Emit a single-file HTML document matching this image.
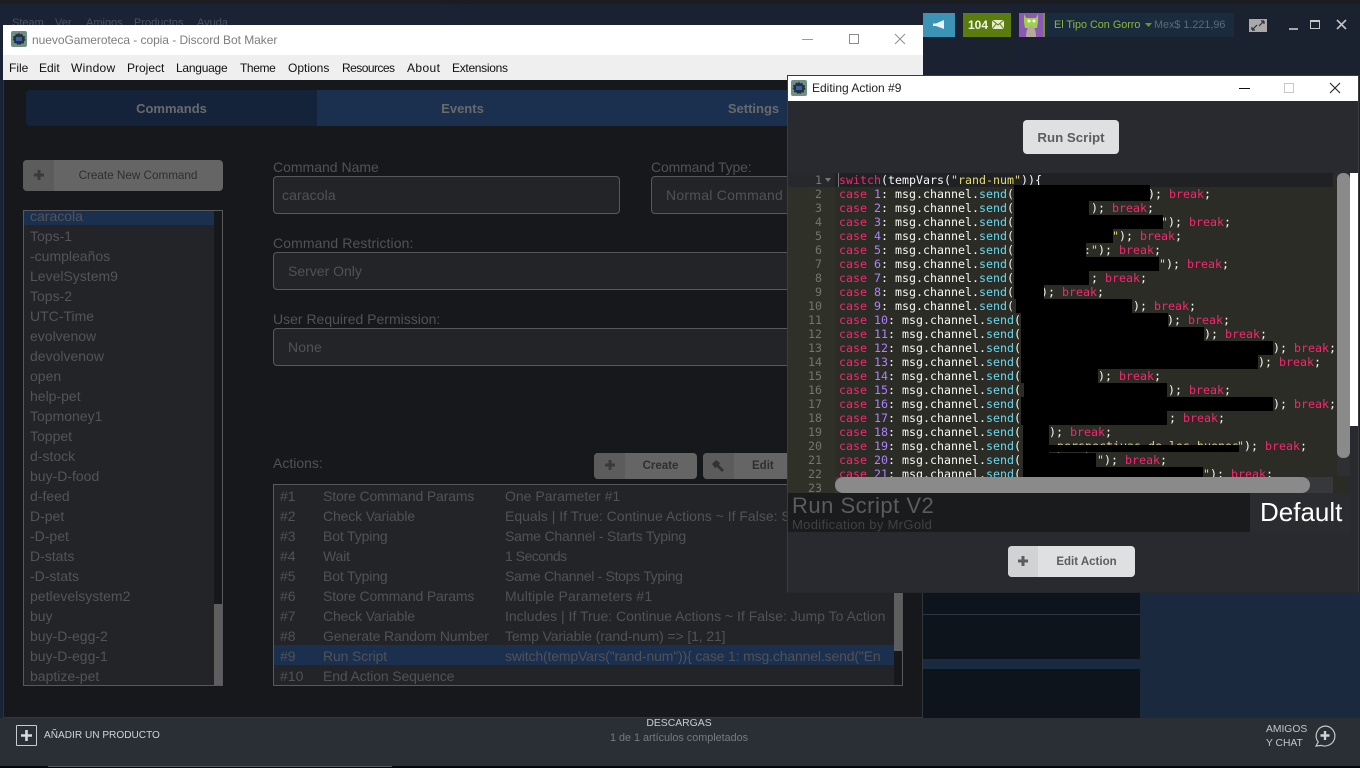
<!DOCTYPE html>
<html><head><meta charset="utf-8"><title>Discord Bot Maker</title>
<style>
html,body{margin:0;padding:0;width:1360px;height:768px;overflow:hidden;background:#1a2130}
*{box-sizing:border-box}
body{position:relative;font-family:"Liberation Sans",sans-serif}
.a{position:absolute}
.t{position:absolute;white-space:nowrap}
.lb{position:absolute;white-space:nowrap;font-size:14px;color:#505256;line-height:16px}
.inp{position:absolute;background:#222428;border:1px solid #58595c;border-radius:4px;height:38px;font-size:14px;color:#505256;line-height:36px;white-space:nowrap}
.it{position:absolute;left:6px;font-size:14px;line-height:20px;color:#525458;white-space:nowrap}
.row{position:absolute;left:0;width:620px;height:20px;line-height:20px;font-size:14px;color:#505256;white-space:nowrap}
.row span{position:absolute;top:0}
.row span:nth-child(1){left:6px}
.row span:nth-child(2){left:49px;letter-spacing:-.14px}
.row span:nth-child(3){left:231px}
.btn{position:absolute;background:#656565;border-radius:4px;overflow:hidden;font-size:12px;font-weight:bold;color:#333;text-align:center}
.btn i{position:absolute;left:0;top:0;bottom:0;background:#5c5c5c}
.m{position:absolute;top:60px;font-size:12px;line-height:16px;color:#111;white-space:nowrap}
#code{position:absolute;left:839px;top:173px;width:498px;height:304px;overflow:hidden;font:11.63px/14px "DejaVu Sans Mono","Liberation Mono",monospace;color:#f8f8f2}
#code div{position:relative;height:14px;white-space:pre}
#code b{font-weight:normal;color:#f92672}
#code i{font-style:normal;color:#ae81ff}
#code u{text-decoration:none;color:#66d9ef}
#code q{quotes:none;color:#e6db74}
#code s{position:absolute;top:0;text-decoration:none}
#code em{position:absolute;top:0;height:14px;background:#000}
#num{position:absolute;left:788px;top:173px;width:34px;font:11.63px/14px "DejaVu Sans Mono","Liberation Mono",monospace;color:#74756d;text-align:right}
</style></head><body>

<!-- steam background -->
<div class="a" style="left:0;top:0;width:1360px;height:4px;background:#1c1d21"></div>
<div class="a" style="left:0;top:4px;width:1360px;height:714px;background:linear-gradient(90deg,#1a2336,#1a2130 60%,#1a2230)"></div>
<div class="t" style="left:12px;top:16px;font-size:11px;line-height:14px;color:#49535f">Steam</div>
<div class="t" style="left:55px;top:16px;font-size:11px;line-height:14px;color:#49535f">Ver</div>
<div class="t" style="left:86px;top:16px;font-size:11px;line-height:14px;color:#49535f">Amigos</div>
<div class="t" style="left:134px;top:16px;font-size:11px;line-height:14px;color:#49535f">Productos</div>
<div class="t" style="left:197px;top:16px;font-size:11px;line-height:14px;color:#49535f">Ayuda</div>

<div class="a" style="left:923px;top:13px;width:32px;height:24px;background:#3c93b6"></div>
<svg class="a" style="left:932px;top:19px" width="14" height="12" viewBox="0 0 14 12"><path d="M1 4.5h3L12 1v9L4 7H1z" fill="#e8f2f6"/></svg>
<div class="a" style="left:963px;top:13px;width:48px;height:24px;background:#5b7d0f"></div>
<div class="t" style="left:968px;top:18px;font-size:12px;line-height:14px;font-weight:bold;color:#f0f4e4">104</div>
<svg class="a" style="left:992px;top:20px" width="12" height="10" viewBox="0 0 12 10"><rect width="12" height="9" fill="#e4ebcf"/><path d="M0 0l6 5 6-5M0 9l4-5M12 9L8 4" stroke="#5b7d0f" fill="none"/></svg>
<div class="a" style="left:1019px;top:13px;width:26px;height:24px;background:#1a2b3f"></div>
<svg class="a" style="left:1019px;top:13px" width="26" height="24" viewBox="0 0 26 24"><rect width="24" height="24" fill="#8d57b5"/><rect x="24" width="2" height="24" fill="#6e9a2c"/><path d="M5 1l2 4h10l2-4v8l-1 6H6L5 9z" fill="#9fd14a"/><circle cx="10" cy="8" r="1.5" fill="#fff"/><circle cx="15" cy="8" r="1.5" fill="#fff"/><path d="M7 24c0-7 2-11 5-11s5 4 5 11z" fill="#b5aa9c"/></svg>
<div class="a" style="left:1045px;top:13px;width:189px;height:24px;background:#1a2b3e"></div>
<div class="t" style="left:1054px;top:18px;font-size:10.8px;line-height:14px;color:#8fb53c">El Tipo Con Gorro</div>
<svg class="a" style="left:1145px;top:23px" width="8" height="5"><path d="M0 0h7L3.5 4z" fill="#6f9033"/></svg>
<div class="t" style="left:1154px;top:18px;font-size:10.8px;line-height:14px;color:#5b6a7c">Mex$ 1.221,96</div>
<svg class="a" style="left:1249px;top:19px" width="18" height="13" viewBox="0 0 18 13"><rect width="18" height="13" fill="#a9a9ab"/><path d="M3 11l5-5M3 11h3M3 11V8M15 2l-5 5M15 2h-3M15 2v3" stroke="#2a2f3a" stroke-width="1.2" fill="none"/></svg>
<div class="a" style="left:1289px;top:28px;width:9px;height:2px;background:#a8a8a8"></div>
<div class="a" style="left:1310px;top:20px;width:10px;height:9px;border:1.5px solid #c4c6c8;border-top-width:2.5px"></div>
<svg class="a" style="left:1336px;top:19px" width="11" height="11"><path d="M1 1l9 9M10 1l-9 9" stroke="#c0c2c4" stroke-width="1.6"/></svg>

<!-- library lower right -->
<div class="a" style="left:923px;top:592px;width:217px;height:126px;background:#0d141c"></div>
<div class="a" style="left:1140px;top:592px;width:220px;height:126px;background:#1a293d"></div>
<div class="a" style="left:923px;top:614px;width:217px;height:1px;background:#2a3646"></div>
<div class="a" style="left:923px;top:659px;width:217px;height:10px;background:#1a2a40"></div>

<!-- bottom bar -->
<div class="a" style="left:0;top:718px;width:1360px;height:48px;background:#2a2e35"></div>
<div class="a" style="left:0;top:766px;width:1360px;height:2px;background:#060708"></div>
<div class="a" style="left:48px;top:766px;width:344px;height:1px;background:#55585c"></div>
<div class="a" style="left:16px;top:725px;width:21px;height:21px;border:1px solid #c8cacc;border-radius:1px"></div>
<svg class="a" style="left:21px;top:730px" width="11" height="11"><path d="M5.5 0v11M0 5.5h11" stroke="#d8dadc" stroke-width="2.6"/></svg>
<div class="t" style="left:44px;top:729px;font-size:10.1px;line-height:14px;color:#d2d4d6">AÑADIR UN PRODUCTO</div>
<div class="t" style="left:579px;width:200px;text-align:center;top:717px;font-size:10.4px;line-height:14px;color:#c9cbcd">DESCARGAS</div>
<div class="t" style="left:579px;width:200px;text-align:center;top:731px;font-size:10.8px;line-height:14px;color:#777b80">1 de 1 artículos completados</div>
<div class="t" style="left:1266px;top:723px;font-size:10.3px;line-height:14px;color:#c4c6c8">AMIGOS</div>
<div class="t" style="left:1266px;top:737px;font-size:10.3px;line-height:14px;color:#c4c6c8">Y CHAT</div>
<svg class="a" style="left:1313px;top:724px" width="24" height="24" viewBox="0 0 24 24"><path d="M12 2a10 10 0 1 1-3.5 19.4L3 22l2.2-4A10 10 0 0 1 12 2z" fill="none" stroke="#c4c6c8" stroke-width="1.2"/><path d="M12 7v9M7.5 11.5h9" stroke="#d0d2d4" stroke-width="2.4"/></svg>

<!-- main window -->
<div class="a" style="left:3px;top:25px;width:920px;height:693px;background:#16181b;border-right:1px solid #33363a;border-bottom:1px solid #33363a;border-left:1px solid #22324a"></div>
<div class="a" style="left:3px;top:25px;width:920px;height:30px;background:#fff"></div>
<div class="a" style="left:3px;top:55px;width:920px;height:25px;background:#efefef"></div>
<svg class="a" style="left:11px;top:31px" width="16" height="16" viewBox="0 0 16 16"><rect width="16" height="16" rx="2" fill="#6d9186"/><path d="M8 1.5l1.2 2 2.2-.8.5 2.3 2.3.5-.8 2.2 1.4 1.3-2 1.2.3 2.3-2.4-.1L9.200 14 8 13l-1.500 1-1.100-1.800-2.400.100.300-2.300-1.800-1.200 1.200-1.300-.700-2.200 2.300-.500.500-2.300 2.200.800z" fill="#2b3036"/><rect x="5" y="6" width="6" height="4" fill="#2f62b5"/></svg>
<div class="t" style="left:32px;top:32px;font-size:12px;line-height:16px;letter-spacing:-.05px;color:#7d7d7d">nuevoGameroteca - copia - Discord Bot Maker</div>
<div class="a" style="left:802px;top:39px;width:11px;height:1px;background:#9a9a9a"></div>
<div class="a" style="left:849px;top:34px;width:10px;height:10px;border:1px solid #8c8c8c"></div>
<svg class="a" style="left:894px;top:33px" width="12" height="12"><path d="M1 1l10 10M11 1L1 11" stroke="#909090" stroke-width="1"/></svg>
<div class="m" style="left:9px">File</div>
<div class="m" style="left:39px">Edit</div>
<div class="m" style="left:71px;letter-spacing:.3px">Window</div>
<div class="m" style="left:127px">Project</div>
<div class="m" style="left:176px;letter-spacing:-.25px">Language</div>
<div class="m" style="left:240px;letter-spacing:-.4px">Theme</div>
<div class="m" style="left:288px">Options</div>
<div class="m" style="left:342px;letter-spacing:-.55px">Resources</div>
<div class="m" style="left:407px;letter-spacing:.4px">About</div>
<div class="m" style="left:452px;letter-spacing:-.3px">Extensions</div>

<!-- tabs -->
<div class="a" style="left:26px;top:90px;width:291px;height:36px;background:#15233a;border-radius:4px 0 0 4px"></div>
<div class="a" style="left:317px;top:90px;width:582px;height:36px;background:#1b304e"></div>
<div class="t" style="left:26px;width:291px;text-align:center;top:101px;font-size:13px;line-height:16px;font-weight:bold;color:#686a6c">Commands</div>
<div class="t" style="left:317px;width:291px;text-align:center;top:101px;font-size:13px;line-height:16px;font-weight:bold;color:#686a6c">Events</div>
<div class="t" style="left:608px;width:291px;text-align:center;top:101px;font-size:13px;line-height:16px;font-weight:bold;color:#686a6c">Settings</div>

<!-- create cmd -->
<div class="btn" style="left:23px;top:160px;width:200px;height:31px;line-height:30px"><i style="width:31px"></i><span style="position:relative;left:15px;font-weight:normal;font-size:11.7px;color:#2f2f2f">Create New Command</span></div>
<svg class="a" style="left:34px;top:170px" width="10" height="10"><path d="M5 0v10M0 5h10" stroke="#3a3a3a" stroke-width="3"/></svg>

<!-- command list -->
<div class="a" style="left:23px;top:210px;width:200px;height:476px;background:#222428;border:1px solid #58595c;overflow:hidden">
<div class="a" style="left:0;top:0;width:190px;height:14px;background:#1b304e"></div>
<div class="a" style="left:190px;top:0;width:8px;height:474px;background:#16181b"></div>
<div class="a" style="left:190px;top:393px;width:8px;height:81px;background:#5e5e5e"></div>
<div class="it" style="top:-5px">caracola</div>
<div class="it" style="top:15px">Tops-1</div>
<div class="it" style="top:35px">-cumpleaños</div>
<div class="it" style="top:55px">LevelSystem9</div>
<div class="it" style="top:75px">Tops-2</div>
<div class="it" style="top:95px">UTC-Time</div>
<div class="it" style="top:115px">evolvenow</div>
<div class="it" style="top:135px">devolvenow</div>
<div class="it" style="top:155px">open</div>
<div class="it" style="top:175px">help-pet</div>
<div class="it" style="top:195px">Topmoney1</div>
<div class="it" style="top:215px">Toppet</div>
<div class="it" style="top:235px">d-stock</div>
<div class="it" style="top:255px">buy-D-food</div>
<div class="it" style="top:275px">d-feed</div>
<div class="it" style="top:295px">D-pet</div>
<div class="it" style="top:315px">-D-pet</div>
<div class="it" style="top:335px">D-stats</div>
<div class="it" style="top:355px">-D-stats</div>
<div class="it" style="top:375px">petlevelsystem2</div>
<div class="it" style="top:395px">buy</div>
<div class="it" style="top:415px">buy-D-egg-2</div>
<div class="it" style="top:435px">buy-D-egg-1</div>
<div class="it" style="top:455px">baptize-pet</div>
</div>

<!-- form -->
<div class="lb" style="left:273px;top:159px">Command Name</div>
<div class="inp" style="left:273px;top:176px;width:347px;padding-left:8px;letter-spacing:.1px">caracola</div>
<div class="lb" style="left:651px;top:159px;letter-spacing:-.15px">Command Type:</div>
<div class="inp" style="left:651px;top:176px;width:200px;padding-left:14px;letter-spacing:.25px">Normal Command</div>
<div class="lb" style="left:273px;top:235px;letter-spacing:.1px">Command Restriction:</div>
<div class="inp" style="left:273px;top:252px;width:600px;padding-left:14px">Server Only</div>
<div class="lb" style="left:273px;top:311px">User Required Permission:</div>
<div class="inp" style="left:273px;top:328px;width:600px;padding-left:14px;letter-spacing:.1px">None</div>
<div class="lb" style="left:273px;top:455px">Actions:</div>

<div class="btn" style="left:594px;top:453px;width:103px;height:26px;line-height:26px;font-size:11.5px;color:#2f2f2f"><i style="width:31px"></i><span style="position:relative;left:15px">Create</span></div>
<svg class="a" style="left:605px;top:460px" width="10" height="10"><path d="M5 0v10M0 5h10" stroke="#3a3a3a" stroke-width="3"/></svg>
<div class="btn" style="left:703px;top:453px;width:100px;height:26px;line-height:26px;font-size:11.5px;color:#2f2f2f;text-align:left"><i style="width:31px"></i><span style="position:absolute;left:49px">Edit</span></div>
<svg class="a" style="left:712px;top:460px" width="13" height="12" viewBox="0 0 13 12"><path d="M0 4l4-4 4 3-1 2 5 5-2 2-5-5-2 1z" fill="#333"/></svg>

<!-- actions list -->
<div class="a" style="left:273px;top:484px;width:630px;height:202px;background:#222428;border:1px solid #58595c;overflow:hidden">
<div class="a" style="left:0;top:160px;width:620px;height:20px;background:#1b304e"></div>
<div class="a" style="left:620px;top:0;width:8px;height:200px;background:#16181b"></div>
<div class="a" style="left:620px;top:0;width:8px;height:166px;background:#5e5e5e"></div>
<div class="row" style="top:1px"><span>#1</span><span>Store Command Params</span><span>One Parameter #1</span></div>
<div class="row" style="top:21px"><span>#2</span><span>Check Variable</span><span>Equals | If True: Continue Actions ~ If False: Stop</span></div>
<div class="row" style="top:41px"><span>#3</span><span>Bot Typing</span><span style="letter-spacing:-.2px">Same Channel - Starts Typing</span></div>
<div class="row" style="top:61px"><span>#4</span><span>Wait</span><span style="letter-spacing:-.5px">1 Seconds</span></div>
<div class="row" style="top:81px"><span>#5</span><span>Bot Typing</span><span style="letter-spacing:-.3px">Same Channel - Stops Typing</span></div>
<div class="row" style="top:101px"><span>#6</span><span>Store Command Params</span><span style="letter-spacing:.15px">Multiple Parameters #1</span></div>
<div class="row" style="top:121px"><span>#7</span><span>Check Variable</span><span>Includes | If True: Continue Actions ~ If False: Jump To Action</span></div>
<div class="row" style="top:141px"><span>#8</span><span>Generate Random Number</span><span style="letter-spacing:-.12px">Temp Variable (rand-num) =&gt; [1, 21]</span></div>
<div class="row" style="top:161px"><span>#9</span><span>Run Script</span><span style="letter-spacing:-.15px">switch(tempVars("rand-num")){ case 1: msg.channel.send("En</span></div>
<div class="row" style="top:181px"><span>#10</span><span>End Action Sequence</span><span></span></div>
</div>

<!-- edit window -->
<div class="a" style="left:787px;top:75px;width:572px;height:518px;background:#282a2f;border:1px solid #3a3c40;border-bottom-color:#25272b"></div>
<div class="a" style="left:788px;top:76px;width:570px;height:25px;background:#fff"></div>
<svg class="a" style="left:791px;top:80px" width="16" height="16" viewBox="0 0 16 16"><rect width="16" height="16" rx="2" fill="#6d9186"/><path d="M8 1.500l1.200 2 2.200-.8.500 2.300 2.300.500-.8 2.200 1.400 1.300-2 1.200.3 2.300-2.400-.1L9.200 14 8 13l-1.500 1-1.100-1.800-2.400.100.300-2.300-1.800-1.200 1.200-1.300-.700-2.200 2.300-.500.500-2.300 2.200.800z" fill="#2b3036"/><rect x="5" y="6" width="6" height="4" fill="#2f62b5"/></svg>
<div class="t" style="left:812px;top:80px;font-size:12px;line-height:16px;color:#222">Editing Action #9</div>
<div class="a" style="left:1239px;top:88px;width:11px;height:1px;background:#111"></div>
<div class="a" style="left:1284px;top:83px;width:10px;height:10px;border:1px solid #c8c8c8"></div>
<svg class="a" style="left:1329px;top:82px" width="12" height="12"><path d="M1 1l10 10M11 1L1 11" stroke="#222" stroke-width="1.100"/></svg>
<div class="a" style="left:1023px;top:120px;width:96px;height:34px;background:#dfe0e2;border-radius:4px;text-align:center;font-size:13.3px;font-weight:bold;line-height:35px;color:#5c5d5f">Run Script</div>

<!-- editor -->
<div class="a" style="left:788px;top:173px;width:47px;height:320px;background:#2f3129"></div>
<div class="a" style="left:788px;top:173px;width:47px;height:14px;background:#26282b"></div>
<div class="a" style="left:835px;top:173px;width:502px;height:304px;background:#2b2c26"></div>
<div class="a" style="left:835px;top:173px;width:498px;height:14px;background:#202124"></div>
<div class="a" style="left:838px;top:173px;width:1px;height:14px;background:#777"></div>
<svg class="a" style="left:825px;top:178px" width="7" height="5"><path d="M0 0h6L3 4z" fill="#777"/></svg>
<div id="num">1<br>2<br>3<br>4<br>5<br>6<br>7<br>8<br>9<br>10<br>11<br>12<br>13<br>14<br>15<br>16<br>17<br>18<br>19<br>20<br>21<br>22<br>23</div>
<div id="code">
<div><b>switch</b>(tempVars(<q>"rand-num"</q>)){</div>
<div><b>case</b> <i>1</i>: msg.channel.<u>send</u>(<em style="left:175px;width:136px;top:-2px;height:16px"></em><s style="left:309px">); <b>break</b>;</s></div>
<div><b>case</b> <i>2</i>: msg.channel.<u>send</u>(<em style="left:175px;width:75px"></em><s style="left:252px">); <b>break</b>;</s></div>
<div><b>case</b> <i>3</i>: msg.channel.<u>send</u>(<s style="left:322px"><q>"</q>); <b>break</b>;</s><em style="left:175px;width:149px"></em></div>
<div><b>case</b> <i>4</i>: msg.channel.<u>send</u>(<em style="left:175px;width:99px"></em><s style="left:273px"><q>"</q>); <b>break</b>;</s></div>
<div><b>case</b> <i>5</i>: msg.channel.<u>send</u>(<s style="left:245px"><q>:"</q>); <b>break</b>;</s><em style="left:175px;width:72px"></em></div>
<div><b>case</b> <i>6</i>: msg.channel.<u>send</u>(<s style="left:320px"><q>"</q>); <b>break</b>;</s><em style="left:175px;width:145px"></em></div>
<div><b>case</b> <i>7</i>: msg.channel.<u>send</u>(<em style="left:175px;width:75px"></em><s style="left:252px">; <b>break</b>;</s></div>
<div><b>case</b> <i>8</i>: msg.channel.<u>send</u>(<s style="left:202px">); <b>break</b>;</s><em style="left:175px;width:30px"></em></div>
<div><b>case</b> <i>9</i>: msg.channel.<u>send</u>(<em style="left:177px;width:116px"></em><s style="left:294px">); <b>break</b>;</s></div>
<div><b>case</b> <i>10</i>: msg.channel.<u>send</u>(<em style="left:182px;width:147px"></em><s style="left:328px">); <b>break</b>;</s></div>
<div><b>case</b> <i>11</i>: msg.channel.<u>send</u>(<em style="left:182px;width:183px"></em><s style="left:365px">); <b>break</b>;</s></div>
<div><b>case</b> <i>12</i>: msg.channel.<u>send</u>(<em style="left:182px;width:252px"></em><s style="left:434px">); <b>break</b>;</s></div>
<div><b>case</b> <i>13</i>: msg.channel.<u>send</u>(<em style="left:182px;width:237px"></em><s style="left:419px">); <b>break</b>;</s></div>
<div><b>case</b> <i>14</i>: msg.channel.<u>send</u>(<em style="left:182px;width:77px"></em><s style="left:259px">); <b>break</b>;</s></div>
<div><b>case</b> <i>15</i>: msg.channel.<u>send</u>(<em style="left:185px;width:143px"></em><s style="left:329px">); <b>break</b>;</s></div>
<div><b>case</b> <i>16</i>: msg.channel.<u>send</u>(<em style="left:182px;width:252px"></em><s style="left:434px">); <b>break</b>;</s></div>
<div><b>case</b> <i>17</i>: msg.channel.<u>send</u>(<em style="left:182px;width:146px"></em><s style="left:330px">; <b>break</b>;</s></div>
<div><b>case</b> <i>18</i>: msg.channel.<u>send</u>(<em style="left:184px;width:26px"></em><s style="left:210px">); <b>break</b>;</s></div>
<div><b>case</b> <i>19</i>: msg.channel.<u>send</u>(<em style="left:184px;width:26px"></em><s style="left:218px"><q>perspectivas de los buenos</q></s><em style="left:210px;width:190px;top:6px;height:7px"></em><s style="left:398px"><q>"</q>); <b>break</b>;</s></div>
<div><b>case</b> <i>20</i>: msg.channel.<u>send</u>(<em style="left:184px;width:73px"></em><s style="left:258px"><q>"</q>); <b>break</b>;</s></div>
<div><b>case</b> <i>21</i>: msg.channel.<u>send</u>(<em style="left:184px;width:180px"></em><s style="left:364px"><q>"</q>); <b>break</b>;</s></div>
</div>
<div class="a" style="left:835px;top:477px;width:498px;height:16px;background:#36383c"></div>
<div class="a" style="left:835px;top:477px;width:475px;height:16px;background:#8a8a8a;border-radius:8px"></div>
<div class="a" style="left:1333px;top:476px;width:17px;height:17px;background:#2a2b25"></div>
<div class="a" style="left:1337px;top:173px;width:13px;height:303px;background:#2d2f33"></div>
<div class="a" style="left:1337px;top:173px;width:13px;height:285px;background:#8a8a8a;border-radius:6px"></div>
<div class="a" style="left:1350px;top:173px;width:8px;height:253px;background:#fff"></div>

<div class="a" style="left:788px;top:493px;width:462px;height:39px;background:#1a1b1d"></div>
<div class="a" style="left:1250px;top:493px;width:100px;height:39px;background:#2a2c30"></div>
<div class="t" style="left:792px;top:492px;font-size:22px;line-height:28px;letter-spacing:.5px;color:#5b5c5e">Run Script V2</div>
<div class="t" style="left:792px;top:517px;font-size:13px;line-height:16px;letter-spacing:.33px;color:#414244">Modification by MrGold</div>
<div class="t" style="left:1260px;top:496px;font-size:26px;line-height:32px;color:#fff">Default</div>

<div class="a" style="left:1008px;top:546px;width:127px;height:31px;background:#dfe0e2;border-radius:4px;overflow:hidden"><div class="a" style="left:0;top:0;width:30px;height:31px;background:#d1d2d4"></div><div class="t" style="left:30px;width:97px;text-align:center;top:9px;font-size:11.5px;line-height:15px;font-weight:bold;color:#5c5d5f">Edit Action</div></div>
<svg class="a" style="left:1018px;top:556px" width="10" height="10"><path d="M5 0v10M0 5h10" stroke="#5c5d5f" stroke-width="3"/></svg>

</body></html>
